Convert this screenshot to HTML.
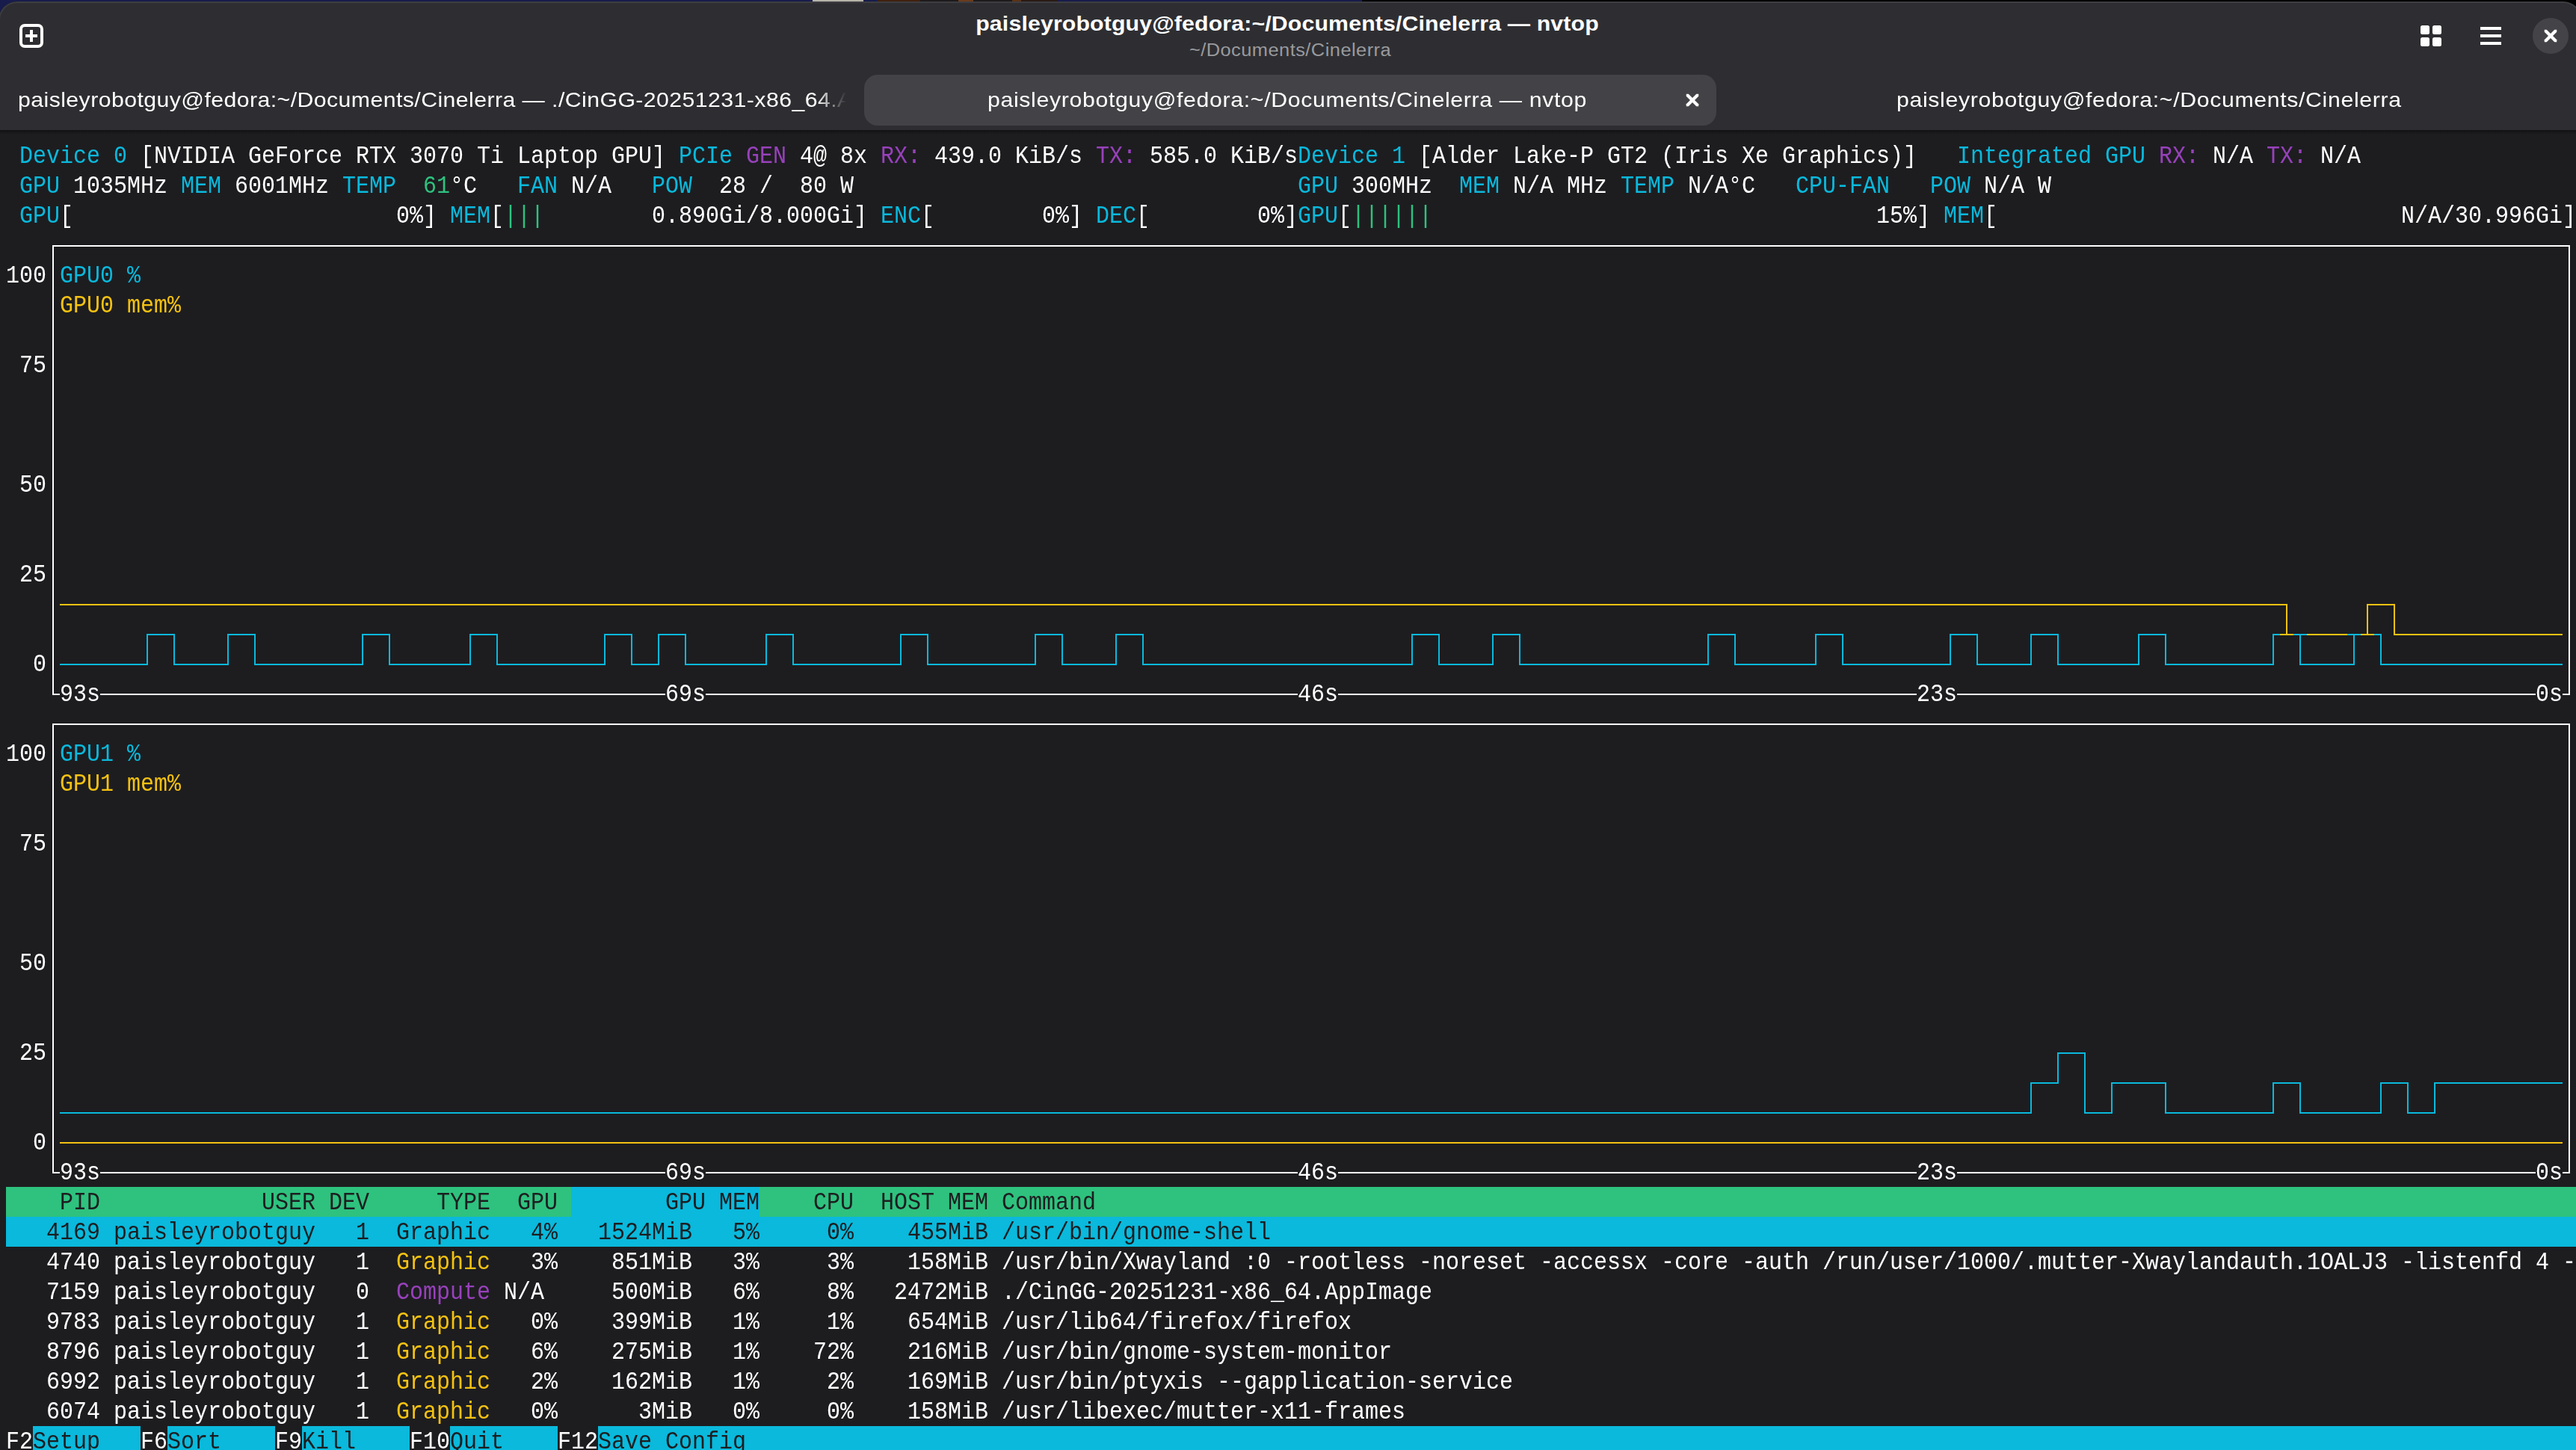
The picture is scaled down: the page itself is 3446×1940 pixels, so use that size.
<!DOCTYPE html>
<html lang="en">
<head>
<meta charset="utf-8">
<title>paisleyrobotguy@fedora:~/Documents/Cinelerra — nvtop</title>
<style>
html,body{margin:0;padding:0}
body{width:3446px;height:1940px;overflow:hidden;background:#000;position:relative;font-family:"Liberation Sans",sans-serif;color:#fff}
.wall{position:absolute;left:0;top:0;width:1822px;height:40px;background:#181c4c}
.wall i{position:absolute;top:0;height:2px;display:block}
.win{position:absolute;left:-2px;top:2px;width:3456px;height:1960px;background:#1d1d20;border-radius:25px;overflow:hidden}
.win:after{content:"";position:absolute;left:0;top:0;right:0;bottom:0;border:2px solid rgba(255,255,255,.075);border-radius:25px;z-index:9}
.in{position:absolute;left:2px;top:0;width:3446px;height:1938px}
.hdr{position:absolute;left:-2px;top:0;width:3456px;height:172px;background:#2e2e32}
.hdr>*{margin-left:2px}
.hline{position:absolute;left:-2px;top:172px;width:3456px;height:6px;background:linear-gradient(#121214 0,#151517 2px,#1a1a1d 4px,#1d1d20 6px)}
.title{position:absolute;left:1722px;white-space:pre;transform:translateX(-50%) scaleX(1.08)}
.t1{top:10px;font-weight:bold;font-size:28px;line-height:40px;letter-spacing:.15px}
.t2{top:49px;font-size:23.5px;line-height:32px;color:#9a9a9e;letter-spacing:.44px;left:1725.5px}
.tab{position:absolute;top:98px;height:68px;line-height:68px;font-size:28px;white-space:pre;letter-spacing:.61px}
.tab span{display:inline-block;transform:scaleX(1.08);transform-origin:0 50%}
.tabsel{left:1156px;width:1140px;background:#434347;border-radius:18px}
.hdr svg{z-index:3}
.art{position:absolute;left:0;top:0}
.term{position:absolute;left:0;top:-2px;width:3446px;height:1940px}
.b{position:absolute;height:40px}
.t{position:absolute;white-space:pre;font-family:"Liberation Mono",monospace;font-size:33px;line-height:40px;height:40px;transform:scaleX(0.908938);transform-origin:0 0;color:#fff}
.c{color:#0ab9dc}.g{color:#2ec27e}.y{color:#f5c211}.m{color:#9841bb}.k{color:#1d1d20}
</style>
</head>
<body>
<div class="wall"><i style="left:1087px;width:68px;background:#b5b3a8"></i><i style="left:1174px;width:241px;background:#40210f"></i><i style="left:1231px;width:51px;background:#1c1a1c"></i><i style="left:1282px;width:20px;background:#6a3c1c"></i><i style="left:1302px;width:52px;background:#1c1a1c"></i><i style="left:1354px;width:12px;background:#5a3318"></i><i style="left:1366px;width:49px;background:#2a1a14"></i></div>
<div class="win"><div class="in">
 <div class="hdr">
  <svg class="art" width="3446" height="172" viewBox="0 0 3446 172">
   <!-- new tab icon -->
   <rect x="28" y="32" width="28" height="28" rx="5" fill="none" stroke="#fff" stroke-width="4"/>
   <rect x="34" y="44" width="16" height="4" fill="#fff"/><rect x="40" y="38" width="4" height="16" fill="#fff"/>
   <!-- grid icon -->
   <g fill="#fff"><rect x="3238" y="32" width="12" height="12" rx="2.5"/><rect x="3254" y="32" width="12" height="12" rx="2.5"/><rect x="3238" y="48" width="12" height="12" rx="2.5"/><rect x="3254" y="48" width="12" height="12" rx="2.5"/></g>
   <!-- menu icon -->
   <g fill="#fff"><rect x="3318" y="34" width="28" height="4"/><rect x="3318" y="44" width="28" height="4"/><rect x="3318" y="54" width="28" height="4"/></g>
   <!-- close -->
   <circle cx="3412" cy="46" r="24" fill="#444448"/>
   <g fill="#fff"><polygon points="3403.75,37.75 3406.75,37.75 3420.25,51.25 3420.25,54.25 3417.25,54.25 3403.75,40.75"/><polygon points="3420.25,37.75 3420.25,40.75 3406.75,54.25 3403.75,54.25 3403.75,51.25 3417.25,37.75"/></g>
   <!-- tab close -->
   <g fill="#fff"><polygon points="2255.75,123.75 2258.75,123.75 2272.25,137.25 2272.25,140.25 2269.25,140.25 2255.75,126.75"/><polygon points="2272.25,123.75 2272.25,126.75 2258.75,140.25 2255.75,140.25 2255.75,137.25 2269.25,123.75"/></g>
  </svg>
  <div class="title t1">paisleyrobotguy@fedora:~/Documents/Cinelerra — nvtop</div>
  <div class="title t2">~/Documents/Cinelerra</div>
  <div class="tab" id="tab1" style="left:24px;letter-spacing:.4px;width:1108px;overflow:hidden;-webkit-mask-image:linear-gradient(90deg,#000 0,#000 1068px,transparent 1108px);mask-image:linear-gradient(90deg,#000 0,#000 1068px,transparent 1108px)"><span>paisleyrobotguy@fedora:~/Documents/Cinelerra — ./CinGG-20251231-x86_64.AppImage</span></div>
  <div class="tab tabsel"></div>
  <div class="tab" id="tab2" style="left:1320.5px"><span>paisleyrobotguy@fedora:~/Documents/Cinelerra — nvtop</span></div>
  <div class="tab" id="tab3" style="left:2536.5px"><span>paisleyrobotguy@fedora:~/Documents/Cinelerra</span></div>
 </div>
 <div class="hline"></div>
 <div class="term">
<div class="b" style="left:8px;top:1588px;width:3438px;background:#2ec27e"></div>
<div class="b" style="left:764px;top:1588px;width:252px;background:#0ab9dc"></div>
<div class="b" style="left:8px;top:1628px;width:3438px;background:#0ab9dc"></div>
<div class="b" style="left:44px;top:1908px;width:144px;background:#0ab9dc"></div>
<div class="b" style="left:224px;top:1908px;width:144px;background:#0ab9dc"></div>
<div class="b" style="left:404px;top:1908px;width:144px;background:#0ab9dc"></div>
<div class="b" style="left:602px;top:1908px;width:144px;background:#0ab9dc"></div>
<div class="b" style="left:800px;top:1908px;width:2646px;background:#0ab9dc"></div>
<svg class="art" width="3446" height="1940" viewBox="0 0 3446 1940" shape-rendering="crispEdges"><g fill="#ffffff"><rect x="70" y="328" width="2" height="602"/><rect x="70" y="968" width="2" height="602"/><rect x="70" y="928" width="10" height="2"/><rect x="70" y="1568" width="10" height="2"/><rect x="70" y="328" width="3368" height="2"/><rect x="70" y="968" width="3368" height="2"/><rect x="134" y="928" width="756" height="2"/><rect x="134" y="1568" width="756" height="2"/><rect x="944" y="928" width="792" height="2"/><rect x="944" y="1568" width="792" height="2"/><rect x="1790" y="928" width="774" height="2"/><rect x="1790" y="1568" width="774" height="2"/><rect x="2618" y="928" width="774" height="2"/><rect x="2618" y="1568" width="774" height="2"/><rect x="3428" y="928" width="10" height="2"/><rect x="3428" y="1568" width="10" height="2"/><rect x="3436" y="328" width="2" height="602"/><rect x="3436" y="968" width="2" height="602"/></g><g fill="#f5c211"><rect x="80" y="808" width="2980" height="2"/><rect x="80" y="1528" width="3348" height="2"/><rect x="3050" y="848" width="18" height="2"/><rect x="3058" y="808" width="2" height="42"/><rect x="3086" y="848" width="54" height="2"/><rect x="3158" y="848" width="18" height="2"/><rect x="3166" y="808" width="2" height="42"/><rect x="3166" y="808" width="38" height="2"/><rect x="3202" y="808" width="2" height="42"/><rect x="3202" y="848" width="226" height="2"/></g><g fill="#0ab9dc"><rect x="80" y="888" width="118" height="2"/><rect x="80" y="1488" width="2638" height="2"/><rect x="196" y="848" width="2" height="42"/><rect x="196" y="848" width="38" height="2"/><rect x="232" y="848" width="2" height="42"/><rect x="232" y="888" width="74" height="2"/><rect x="304" y="848" width="2" height="42"/><rect x="304" y="848" width="38" height="2"/><rect x="340" y="848" width="2" height="42"/><rect x="340" y="888" width="146" height="2"/><rect x="484" y="848" width="2" height="42"/><rect x="484" y="848" width="38" height="2"/><rect x="520" y="848" width="2" height="42"/><rect x="520" y="888" width="110" height="2"/><rect x="628" y="848" width="2" height="42"/><rect x="628" y="848" width="38" height="2"/><rect x="664" y="848" width="2" height="42"/><rect x="664" y="888" width="146" height="2"/><rect x="808" y="848" width="2" height="42"/><rect x="808" y="848" width="38" height="2"/><rect x="844" y="848" width="2" height="42"/><rect x="844" y="888" width="38" height="2"/><rect x="880" y="848" width="2" height="42"/><rect x="880" y="848" width="38" height="2"/><rect x="916" y="848" width="2" height="42"/><rect x="916" y="888" width="110" height="2"/><rect x="1024" y="848" width="2" height="42"/><rect x="1024" y="848" width="38" height="2"/><rect x="1060" y="848" width="2" height="42"/><rect x="1060" y="888" width="146" height="2"/><rect x="1204" y="848" width="2" height="42"/><rect x="1204" y="848" width="38" height="2"/><rect x="1240" y="848" width="2" height="42"/><rect x="1240" y="888" width="146" height="2"/><rect x="1384" y="848" width="2" height="42"/><rect x="1384" y="848" width="38" height="2"/><rect x="1420" y="848" width="2" height="42"/><rect x="1420" y="888" width="74" height="2"/><rect x="1492" y="848" width="2" height="42"/><rect x="1492" y="848" width="38" height="2"/><rect x="1528" y="848" width="2" height="42"/><rect x="1528" y="888" width="362" height="2"/><rect x="1888" y="848" width="2" height="42"/><rect x="1888" y="848" width="38" height="2"/><rect x="1924" y="848" width="2" height="42"/><rect x="1924" y="888" width="74" height="2"/><rect x="1996" y="848" width="2" height="42"/><rect x="1996" y="848" width="38" height="2"/><rect x="2032" y="848" width="2" height="42"/><rect x="2032" y="888" width="254" height="2"/><rect x="2284" y="848" width="2" height="42"/><rect x="2284" y="848" width="38" height="2"/><rect x="2320" y="848" width="2" height="42"/><rect x="2320" y="888" width="110" height="2"/><rect x="2428" y="848" width="2" height="42"/><rect x="2428" y="848" width="38" height="2"/><rect x="2464" y="848" width="2" height="42"/><rect x="2464" y="888" width="146" height="2"/><rect x="2608" y="848" width="2" height="42"/><rect x="2608" y="848" width="38" height="2"/><rect x="2644" y="848" width="2" height="42"/><rect x="2644" y="888" width="74" height="2"/><rect x="2716" y="848" width="2" height="42"/><rect x="2716" y="1448" width="2" height="42"/><rect x="2716" y="848" width="38" height="2"/><rect x="2716" y="1448" width="38" height="2"/><rect x="2752" y="848" width="2" height="42"/><rect x="2752" y="1408" width="2" height="42"/><rect x="2752" y="1408" width="38" height="2"/><rect x="2752" y="888" width="110" height="2"/><rect x="2788" y="1408" width="2" height="82"/><rect x="2788" y="1488" width="38" height="2"/><rect x="2824" y="1448" width="2" height="42"/><rect x="2824" y="1448" width="74" height="2"/><rect x="2860" y="848" width="2" height="42"/><rect x="2860" y="848" width="38" height="2"/><rect x="2896" y="848" width="2" height="42"/><rect x="2896" y="1448" width="2" height="42"/><rect x="2896" y="888" width="146" height="2"/><rect x="2896" y="1488" width="146" height="2"/><rect x="3040" y="848" width="2" height="42"/><rect x="3040" y="1448" width="2" height="42"/><rect x="3040" y="848" width="10" height="2"/><rect x="3040" y="1448" width="38" height="2"/><rect x="3068" y="848" width="18" height="2"/><rect x="3076" y="848" width="2" height="42"/><rect x="3076" y="1448" width="2" height="42"/><rect x="3076" y="888" width="74" height="2"/><rect x="3076" y="1488" width="110" height="2"/><rect x="3140" y="848" width="18" height="2"/><rect x="3148" y="848" width="2" height="42"/><rect x="3176" y="848" width="10" height="2"/><rect x="3184" y="848" width="2" height="42"/><rect x="3184" y="1448" width="2" height="42"/><rect x="3184" y="1448" width="38" height="2"/><rect x="3184" y="888" width="244" height="2"/><rect x="3220" y="1448" width="2" height="42"/><rect x="3220" y="1488" width="38" height="2"/><rect x="3256" y="1448" width="2" height="42"/><rect x="3256" y="1448" width="172" height="2"/></g></svg>
<div class="t" style="left:26px;top:190px"><span class="c">Device 0 </span>[NVIDIA GeForce RTX 3070 Ti Laptop GPU] <span class="c">PCIe </span><span class="m">GEN </span>4@ 8x <span class="m">RX: </span>439.0 KiB/s <span class="m">TX: </span>585.0 KiB/s<span class="c">Device 1 </span>[Alder Lake-P GT2 (Iris Xe Graphics)]</div>
<div class="t" style="left:2618px;top:190px"><span class="c">Integrated GPU </span><span class="m">RX: </span>N/A <span class="m">TX: </span>N/A</div>
<div class="t" style="left:26px;top:230px"><span class="c">GPU </span>1035MHz <span class="c">MEM </span>6001MHz <span class="c">TEMP</span></div>
<div class="t" style="left:566px;top:230px"><span class="g">61</span>°C</div>
<div class="t" style="left:692px;top:230px"><span class="c">FAN </span>N/A</div>
<div class="t" style="left:872px;top:230px"><span class="c">POW</span></div>
<div class="t" style="left:962px;top:230px">28 /</div>
<div class="t" style="left:1070px;top:230px">80 W</div>
<div class="t" style="left:1736px;top:230px"><span class="c">GPU </span>300MHz</div>
<div class="t" style="left:1952px;top:230px"><span class="c">MEM </span>N/A MHz <span class="c">TEMP </span>N/A°C</div>
<div class="t" style="left:2402px;top:230px"><span class="c">CPU-FAN</span></div>
<div class="t" style="left:2582px;top:230px"><span class="c">POW </span>N/A W</div>
<div class="t" style="left:26px;top:270px"><span class="c">GPU</span>[</div>
<div class="t" style="left:530px;top:270px">0%] <span class="c">MEM</span>[<span class="g">|||</span></div>
<div class="t" style="left:872px;top:270px">0.890Gi/8.000Gi] <span class="c">ENC</span>[</div>
<div class="t" style="left:1394px;top:270px">0%] <span class="c">DEC</span>[</div>
<div class="t" style="left:1682px;top:270px">0%]<span class="c">GPU</span>[<span class="g">||||||</span></div>
<div class="t" style="left:2510px;top:270px">15%] <span class="c">MEM</span>[</div>
<div class="t" style="left:3212px;top:270px">N/A/30.996Gi]</div>
<div class="t" style="left:8px;top:350px">100 <span class="c">GPU0 %</span></div>
<div class="t" style="left:80px;top:390px"><span class="y">GPU0 mem%</span></div>
<div class="t" style="left:26px;top:470px">75</div>
<div class="t" style="left:26px;top:630px">50</div>
<div class="t" style="left:26px;top:750px">25</div>
<div class="t" style="left:44px;top:870px">0</div>
<div class="t" style="left:80px;top:910px">93s</div>
<div class="t" style="left:890px;top:910px">69s</div>
<div class="t" style="left:1736px;top:910px">46s</div>
<div class="t" style="left:2564px;top:910px">23s</div>
<div class="t" style="left:3392px;top:910px">0s</div>
<div class="t" style="left:8px;top:990px">100 <span class="c">GPU1 %</span></div>
<div class="t" style="left:80px;top:1030px"><span class="y">GPU1 mem%</span></div>
<div class="t" style="left:26px;top:1110px">75</div>
<div class="t" style="left:26px;top:1270px">50</div>
<div class="t" style="left:26px;top:1390px">25</div>
<div class="t" style="left:44px;top:1510px">0</div>
<div class="t" style="left:80px;top:1550px">93s</div>
<div class="t" style="left:890px;top:1550px">69s</div>
<div class="t" style="left:1736px;top:1550px">46s</div>
<div class="t" style="left:2564px;top:1550px">23s</div>
<div class="t" style="left:3392px;top:1550px">0s</div>
<div class="t" style="left:80px;top:1590px"><span class="k">PID</span></div>
<div class="t" style="left:350px;top:1590px"><span class="k">USER DEV</span></div>
<div class="t" style="left:584px;top:1590px"><span class="k">TYPE</span></div>
<div class="t" style="left:692px;top:1590px"><span class="k">GPU</span></div>
<div class="t" style="left:890px;top:1590px"><span class="k">GPU MEM</span></div>
<div class="t" style="left:1088px;top:1590px"><span class="k">CPU</span></div>
<div class="t" style="left:1178px;top:1590px"><span class="k">HOST MEM Command</span></div>
<div class="t" style="left:62px;top:1630px"><span class="k">4169 paisleyrobotguy</span></div>
<div class="t" style="left:476px;top:1630px"><span class="k">1</span></div>
<div class="t" style="left:530px;top:1630px"><span class="k">Graphic</span></div>
<div class="t" style="left:710px;top:1630px"><span class="k">4%</span></div>
<div class="t" style="left:800px;top:1630px"><span class="k">1524MiB</span></div>
<div class="t" style="left:980px;top:1630px"><span class="k">5%</span></div>
<div class="t" style="left:1106px;top:1630px"><span class="k">0%</span></div>
<div class="t" style="left:1214px;top:1630px"><span class="k">455MiB /usr/bin/gnome-shell</span></div>
<div class="t" style="left:62px;top:1670px">4740 paisleyrobotguy</div>
<div class="t" style="left:476px;top:1670px">1</div>
<div class="t" style="left:530px;top:1670px"><span class="y">Graphic</span></div>
<div class="t" style="left:710px;top:1670px">3%</div>
<div class="t" style="left:818px;top:1670px">851MiB</div>
<div class="t" style="left:980px;top:1670px">3%</div>
<div class="t" style="left:1106px;top:1670px">3%</div>
<div class="t" style="left:1214px;top:1670px">158MiB /usr/bin/Xwayland :0 -rootless -noreset -accessx -core -auth /run/user/1000/.mutter-Xwaylandauth.1OALJ3 -listenfd 4 -</div>
<div class="t" style="left:62px;top:1710px">7159 paisleyrobotguy</div>
<div class="t" style="left:476px;top:1710px">0</div>
<div class="t" style="left:530px;top:1710px"><span class="m">Compute </span>N/A</div>
<div class="t" style="left:818px;top:1710px">500MiB</div>
<div class="t" style="left:980px;top:1710px">6%</div>
<div class="t" style="left:1106px;top:1710px">8%</div>
<div class="t" style="left:1196px;top:1710px">2472MiB ./CinGG-20251231-x86_64.AppImage</div>
<div class="t" style="left:62px;top:1750px">9783 paisleyrobotguy</div>
<div class="t" style="left:476px;top:1750px">1</div>
<div class="t" style="left:530px;top:1750px"><span class="y">Graphic</span></div>
<div class="t" style="left:710px;top:1750px">0%</div>
<div class="t" style="left:818px;top:1750px">399MiB</div>
<div class="t" style="left:980px;top:1750px">1%</div>
<div class="t" style="left:1106px;top:1750px">1%</div>
<div class="t" style="left:1214px;top:1750px">654MiB /usr/lib64/firefox/firefox</div>
<div class="t" style="left:62px;top:1790px">8796 paisleyrobotguy</div>
<div class="t" style="left:476px;top:1790px">1</div>
<div class="t" style="left:530px;top:1790px"><span class="y">Graphic</span></div>
<div class="t" style="left:710px;top:1790px">6%</div>
<div class="t" style="left:818px;top:1790px">275MiB</div>
<div class="t" style="left:980px;top:1790px">1%</div>
<div class="t" style="left:1088px;top:1790px">72%</div>
<div class="t" style="left:1214px;top:1790px">216MiB /usr/bin/gnome-system-monitor</div>
<div class="t" style="left:62px;top:1830px">6992 paisleyrobotguy</div>
<div class="t" style="left:476px;top:1830px">1</div>
<div class="t" style="left:530px;top:1830px"><span class="y">Graphic</span></div>
<div class="t" style="left:710px;top:1830px">2%</div>
<div class="t" style="left:818px;top:1830px">162MiB</div>
<div class="t" style="left:980px;top:1830px">1%</div>
<div class="t" style="left:1106px;top:1830px">2%</div>
<div class="t" style="left:1214px;top:1830px">169MiB /usr/bin/ptyxis --gapplication-service</div>
<div class="t" style="left:62px;top:1870px">6074 paisleyrobotguy</div>
<div class="t" style="left:476px;top:1870px">1</div>
<div class="t" style="left:530px;top:1870px"><span class="y">Graphic</span></div>
<div class="t" style="left:710px;top:1870px">0%</div>
<div class="t" style="left:854px;top:1870px">3MiB</div>
<div class="t" style="left:980px;top:1870px">0%</div>
<div class="t" style="left:1106px;top:1870px">0%</div>
<div class="t" style="left:1214px;top:1870px">158MiB /usr/libexec/mutter-x11-frames</div>
<div class="t" style="left:8px;top:1910px">F2<span class="k">Setup</span></div>
<div class="t" style="left:188px;top:1910px">F6<span class="k">Sort</span></div>
<div class="t" style="left:368px;top:1910px">F9<span class="k">Kill</span></div>
<div class="t" style="left:548px;top:1910px">F10<span class="k">Quit</span></div>
<div class="t" style="left:746px;top:1910px">F12<span class="k">Save Config</span></div>
 </div>
</div></div>
</body>
</html>
